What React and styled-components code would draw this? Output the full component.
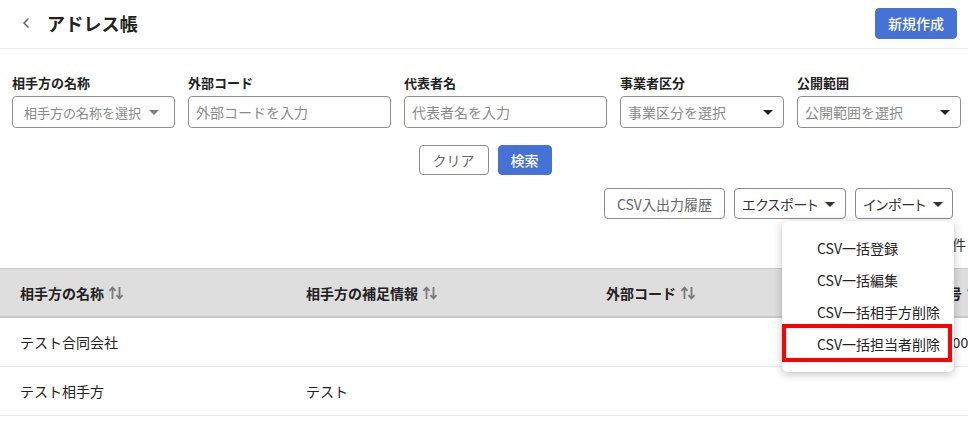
import React from "react";
import styled, { createGlobalStyle } from "styled-components";

const Global = createGlobalStyle`
  html, body { margin: 0; padding: 0; background: #fff; }
  body {
    width: 968px; height: 427px; overflow: hidden;
    font-family: "Noto Sans CJK JP", "Noto Sans", sans-serif;
    color: #222;
  }
  * { box-sizing: border-box; }
`;

const Page = styled.div`
  width: 968px;
  position: relative;
`;

const Header = styled.header`
  height: 49px;
  border-bottom: 1px solid #ececec;
  display: flex;
  align-items: center;
  padding: 0 11px 2px 18px;
`;

const BackButton = styled.span`
  display: flex;
  align-items: center;
  color: #666;
  width: 29px;
`;

const Title = styled.h1`
  margin: 0;
  font-size: 18px;
  font-weight: 700;
  color: #222;
  flex: 1;
  letter-spacing: 0.2px;
`;

const Button = styled.button`
  font-family: inherit;
  font-size: 14px;
  height: ${(p) => p.$h || 30}px;
  padding: 0 ${(p) => p.$pr ?? p.$px ?? 13}px 0 ${(p) => p.$px ?? 13}px;
  border-radius: 4px;
  display: inline-flex;
  align-items: center;
  justify-content: center;
  gap: 0;
  cursor: pointer;
  white-space: nowrap;
  ${(p) => p.$palt && `font-feature-settings: "palt";`}
  ${(p) =>
    p.$primary
      ? `background: #4672d6; color: #fff; border: 1px solid #4672d6; font-weight: 500;`
      : `background: #fff; color: ${p.$dark ? "#333" : "#666"}; border: 1px solid #8a8a8a;`}
`;

const Filters = styled.section`
  display: grid;
  grid-template-columns: 163px 203px 203px 164px 164px;
  column-gap: 13px;
  padding: 24px 0 0 12px;
`;

const Field = styled.div`
  display: flex;
  flex-direction: column;
`;

const Label = styled.label`
  font-size: 13px;
  font-weight: 700;
  line-height: 20px;
  color: #222;
  margin-bottom: 3px;
`;

const Input = styled.div`
  height: 32px;
  border: 1px solid #8f8f8f;
  border-radius: 4px;
  display: flex;
  align-items: center;
  justify-content: space-between;
  padding: 0 ${(p) => (p.$auto ? 8 : 3)}px 0 ${(p) => (p.$auto ? 11 : 7)}px;
  font-size: ${(p) => (p.$auto ? 13 : 14)}px;
  color: #8a8a8a;
  white-space: nowrap;
  overflow: hidden;
`;

const Caret = styled.span`
  display: flex;
  flex-shrink: 0;
  color: ${(p) => (p.$light ? "#808080" : "#222")};
`;

const SearchRow = styled.div`
  display: flex;
  justify-content: center;
  gap: 9px;
  margin-top: 17px;
  padding-left: 2px;
`;

const ToolRow = styled.div`
  display: flex;
  justify-content: flex-end;
  gap: 9px;
  margin-top: 13px;
  padding-right: 15px;
  position: relative;
`;

const CountRow = styled.div`
  height: 49px;
  display: flex;
  align-items: center;
  justify-content: flex-end;
  font-size: 14px;
  padding-right: 2px;
  color: #333;
`;

const Table = styled.div`
  width: 1200px;
`;

const Row = styled.div`
  display: grid;
  grid-template-columns: 286px 300px 300px 1fr;
  height: ${(p) => (p.$head ? 50 : 49)}px;
  align-items: center;
  ${(p) =>
    p.$head
      ? `background: #dedede; border-top: 1px solid #c9c9c9; border-bottom: 2px solid #c9c9c9; font-weight: 700;`
      : `border-bottom: 1px solid #e9e9e9;`}
  font-size: 14px;
  color: #222;
`;

const Cell = styled.div`
  padding-left: 20px;
  display: flex;
  align-items: center;
  gap: 4px;
  white-space: nowrap;
`;

const SortIcon = styled.span`
  display: flex;
  flex-shrink: 0;
  color: #7a7a7a;
`;

const Menu = styled.ul`
  position: absolute;
  top: 33px;
  right: 14px;
  width: 172px;
  margin: 0;
  padding: 11px 0 12px;
  list-style: none;
  background: #fff;
  border-radius: 6px;
  box-shadow: 0 2px 8px rgba(0, 0, 0, 0.25);
  z-index: 10;
`;

const MenuItem = styled.li`
  position: relative;
  height: 32px;
  display: flex;
  align-items: center;
  padding-left: 35px;
  font-size: 14px;
  color: #222;
  white-space: nowrap;
  ${(p) =>
    p.$marked &&
    `&::after {
      content: "";
      position: absolute;
      left: 0; right: 2px; top: -4px; bottom: -2px;
      border: 4px solid #ff0000;
      pointer-events: none;
    }`}
`;

const Chevron = () => (
  <svg width="16" height="16" viewBox="0 0 24 24" fill="none" stroke="currentColor" strokeWidth="2.4" strokeLinecap="round" strokeLinejoin="round">
    <path d="M15 18l-6-6 6-6" />
  </svg>
);

const Drop = () => (
  <svg width="24" height="24" viewBox="0 0 24 24" fill="currentColor">
    <path d="M7 10l5 5 5-5z" />
  </svg>
);

const Sort = () => (
  <svg width="16" height="14" viewBox="0 0 16 14" fill="none" stroke="currentColor" strokeWidth="1.8" strokeLinecap="butt" strokeLinejoin="miter">
    <path d="M4.5 13V1.8M1.4 4.9 4.5 1.6 7.6 4.9" />
    <path d="M11.5 1v11.2M8.4 9.1l3.1 3.3 3.1-3.3" />
  </svg>
);

const filters = [
  { label: "相手方の名称", ph: "相手方の名称を選択", select: true, auto: true },
  { label: "外部コード", ph: "外部コードを入力" },
  { label: "代表者名", ph: "代表者名を入力" },
  { label: "事業者区分", ph: "事業区分を選択", select: true },
  { label: "公開範囲", ph: "公開範囲を選択", select: true },
];

const menuItems = ["CSV一括登録", "CSV一括編集", "CSV一括相手方削除", "CSV一括担当者削除"];

const columns = ["相手方の名称", "相手方の補足情報", "外部コード", "法人番号"];
const rows = [
  ["テスト合同会社", "", "", "0000000000000"],
  ["テスト相手方", "テスト", "", ""],
];

export default function App() {
  return (
    <Page>
      <Global />
      <Header>
        <BackButton>
          <Chevron />
        </BackButton>
        <Title>アドレス帳</Title>
        <Button $primary $h={31} $px={12}>新規作成</Button>
      </Header>

      <Filters>
        {filters.map((f) => (
          <Field key={f.label}>
            <Label>{f.label}</Label>
            <Input $auto={f.auto}>
              <span>{f.ph}</span>
              {f.select && (
                <Caret $light={f.auto}>
                  <Drop />
                </Caret>
              )}
            </Input>
          </Field>
        ))}
      </Filters>

      <SearchRow>
        <Button $px={13}>クリア</Button>
        <Button $primary $px={12}>検索</Button>
      </SearchRow>

      <ToolRow>
        <Button $h={31} $px={12}>CSV入出力履歴</Button>
        <Button $h={31} $px={7} $pr={3} $dark $palt>
          エクスポート
          <Drop />
        </Button>
        <Button $h={31} $px={7} $pr={2} $dark $palt>
          インポート
          <Drop />
        </Button>
        <Menu>
          {menuItems.map((m, i) => (
            <MenuItem key={m} $marked={i === menuItems.length - 1}>
              {m}
            </MenuItem>
          ))}
        </Menu>
      </ToolRow>

      <CountRow>全2件</CountRow>

      <Table>
        <Row $head>
          {columns.map((c) => (
            <Cell key={c}>
              {c}
              <SortIcon>
                <Sort />
              </SortIcon>
            </Cell>
          ))}
        </Row>
        {rows.map((r, i) => (
          <Row key={i}>
            {r.map((v, j) => (
              <Cell key={j}>{v}</Cell>
            ))}
          </Row>
        ))}
      </Table>
    </Page>
  );
}
